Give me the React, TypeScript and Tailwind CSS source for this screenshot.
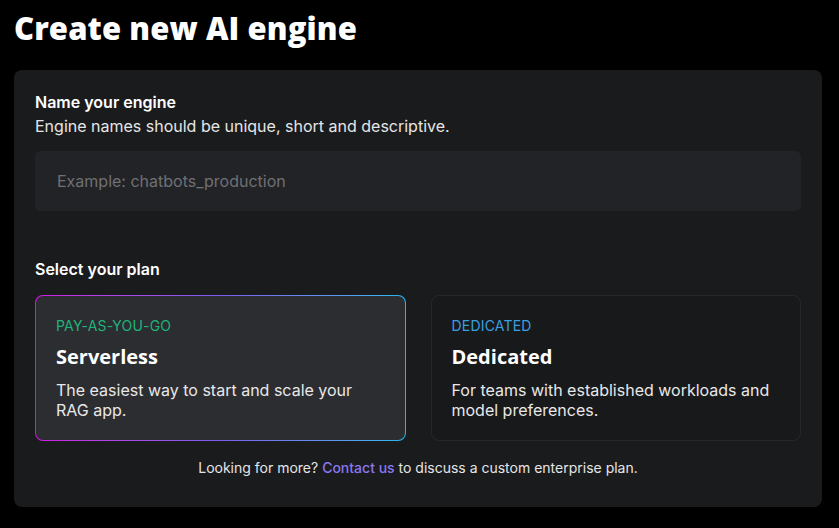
export default function App() {
  return (
    <div className="min-h-[528px] bg-black px-[14px] pt-[9px] font-['Inter',sans-serif] text-white">
      <h1 className="font-['Open_Sans',sans-serif] text-[31px] font-extrabold leading-[38px] tracking-[0.1px]">Create new AI engine</h1>

      <div className="mt-[23px] w-[808px] rounded-lg bg-[#1a1b1d] px-[21px] pt-[22px] pb-[30px]">
        {/* Engine name */}
        <h2 className="text-[16px] font-semibold leading-[20px]">Name your engine</h2>
        <p className="mt-[4px] text-[16px] leading-[20px] text-[#e6e6e6]">Engine names should be unique, short and descriptive.</p>
        <input
          type="text"
          placeholder="Example: chatbots_production"
          className="mt-[15px] h-[60px] w-full rounded-md bg-[#222326] px-[22px] text-[16px] text-white outline-none placeholder:text-[#6f7074]"
        />

        {/* Plan */}
        <h2 className="mt-[48px] text-[16px] font-semibold leading-[20px]">Select your plan</h2>
        <div className="mt-[16px] grid grid-cols-2 gap-[25px]">
          <div className="rounded-lg bg-gradient-to-r from-[#d312e6] via-[#7a5cf0] to-[#1eb8f0] p-px">
            <div className="h-[144px] rounded-[7px] bg-[#2c2d31] px-[20px] pt-[21px]">
              <p className="text-[14px] leading-[18px] tracking-[0.2px] text-[#1fb37e]">PAY-AS-YOU-GO</p>
              <h3 className="mt-[10px] font-['Open_Sans',sans-serif] text-[20px] font-bold leading-[24px]">Serverless</h3>
              <p className="mt-[11px] text-[16px] leading-[20px] text-[#e8e8e8]">The easiest way to start and scale your RAG app.</p>
            </div>
          </div>
          <div className="h-[146px] rounded-lg border border-[#26272a] bg-[#18191b] px-[20px] pt-[21px]">
            <p className="text-[14px] leading-[18px] tracking-[0.2px] text-[#3a9fe0]">DEDICATED</p>
            <h3 className="mt-[10px] font-['Open_Sans',sans-serif] text-[20px] font-bold leading-[24px]">Dedicated</h3>
            <p className="mt-[11px] text-[16px] leading-[20px] text-[#e8e8e8]">For teams with established workloads and model preferences.</p>
          </div>
        </div>

        <p className="mt-[18px] text-center text-[14px] leading-[18px] text-[#e6e6e6]">
          Looking for more? <a className="font-medium text-[#8b78f0]">Contact us</a> to discuss a custom enterprise plan.
        </p>
      </div>
    </div>
  );
}
